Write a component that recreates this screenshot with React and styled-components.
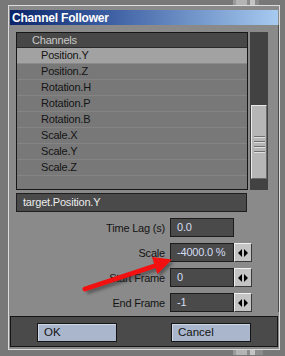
import React from "react";
import styled, { createGlobalStyle } from "styled-components";

const Global = createGlobalStyle`
  html, body { margin: 0; padding: 0; background: #787878; }
  body { font-family: "Liberation Sans", Arial, sans-serif; }
  * { box-sizing: border-box; }
`;

const Page = styled.div`
  position: relative;
  width: 285px;
  height: 356px;
  background: #787878;
  padding-left: 8px;
  overflow: hidden;
`;

const Strip = styled.div`
  height: ${(p) => p.h}px;
  display: flex;
  padding-left: 225px;
`;

const BehindBlock = styled.div`
  width: ${(p) => p.w}px;
  height: 100%;
  background: linear-gradient(to right, #9a9a9a 0 3px, #b4b4b4 3px 14px, #8a8a8a 14px 17px, #c4c4c4 17px 22px, #8c8c8c 22px);
`;

const Dialog = styled.div`
  width: 272px;
  border: 1px solid #dcdcdc;
  background: #8a8a8a;
  padding: 4px 1px 2px 1px;
  display: flex;
  flex-direction: column;
`;

const TitleBar = styled.div`
  height: 15px;
  background: linear-gradient(to right, #0a246a 0%, #3a5ca0 35%, #a6caf0 100%);
  color: #ffffff;
  font-weight: bold;
  font-size: 12px;
  letter-spacing: -0.2px;
  line-height: 16px;
  padding-left: 2px;
  white-space: nowrap;
`;

const Body = styled.div`
  display: flex;
  flex-direction: column;
  padding: 7px 0 0 6px;
  border-right: 1px solid #4a4a4a;
  margin-right: -1px;
`;

const ListArea = styled.div`
  display: flex;
  gap: 2px;
`;

const ListBox = styled.div`
  width: 232px;
  height: 158px;
  border: 1px solid #161616;
  background: #787878;
  display: flex;
  flex-direction: column;
  font-size: 11px;
  letter-spacing: -0.2px;
`;

const ListHeader = styled.div`
  height: 15px;
  line-height: 15px;
  background: #484848;
  color: #c8c8c8;
  padding-left: 15px;
  border-bottom: 1px solid #2a2a2a;
`;

const Row = styled.div`
  height: 16px;
  line-height: 15px;
  padding-left: 24px;
  color: #141414;
  background: ${(p) => (p.selected ? "#a2a2a2" : "#787878")};
  border-bottom: 1px solid ${(p) => (p.selected ? "#8a8a8a" : "#848484")};
`;

const ScrollBar = styled.div`
  width: 18px;
  height: 158px;
  background: #424242;
  display: flex;
  flex-direction: column;
`;

const ScrollSpace = styled.div`
  height: ${(p) => p.h}px;
  flex: none;
`;

const Thumb = styled.div`
  height: 74px;
  flex: none;
  margin: 0 1px;
  background: #b6b6b6;
  border-top: 1px solid #e8e8e8;
  border-left: 1px solid #e8e8e8;
  border-right: 1px solid #6a6a6a;
  border-bottom: 1px solid #6a6a6a;
  display: flex;
  flex-direction: column;
  align-items: center;
  padding-top: 30px;
  gap: 4px;
`;

const Grip = styled.div`
  width: 11px;
  height: 1px;
  background: #707070;
  box-shadow: 0 1px 0 #e0e0e0;
`;

const TargetField = styled.div`
  margin-top: 3px;
  width: 231px;
  height: 19px;
  background: #4a4a4a;
  border: 1px solid #1e1e1e;
  color: #ececec;
  font-size: 11px;
  letter-spacing: -0.2px;
  line-height: 17px;
  padding-left: 6px;
`;

const Form = styled.div`
  display: flex;
  flex-direction: column;
  gap: 6px;
  margin-top: 6px;
`;

const FormRow = styled.div`
  display: grid;
  grid-template-columns: 154px 64px 18px;
  height: 19px;
  align-items: center;
`;

const Label = styled.div`
  text-align: right;
  padding-right: 5px;
  font-size: 11px;
  letter-spacing: -0.2px;
  color: #141414;
  white-space: nowrap;
`;

const ValueBox = styled.div`
  height: 19px;
  background: #4a4a4a;
  border: 1px solid #1c1c1c;
  color: #d4def4;
  font-size: 11px;
  letter-spacing: -0.2px;
  line-height: 17px;
  padding-left: 6px;
  white-space: nowrap;
`;

const Spinner = styled.div`
  height: 19px;
  background: #c4c4c4;
  border-top: 1px solid #f0f0f0;
  border-left: 1px solid #f0f0f0;
  border-right: 1px solid #3a3a3a;
  border-bottom: 1px solid #3a3a3a;
  display: flex;
  align-items: center;
  justify-content: center;
`;

const ButtonPanel = styled.div`
  margin: 4px 0 0 0;
  height: 31px;
  background: #4a4a4a;
  border: 1px solid #141414;
  display: flex;
  padding: 6px 0 0 26px;
  gap: 54px;
`;

const Button = styled.div`
  width: 80px;
  height: 19px;
  background: #a9b6cc;
  border: 1px solid #141414;
  box-shadow: inset 1px 1px 0 #d0d8e6;
  color: #141414;
  font-size: 11.5px;
  line-height: 17px;
  padding-left: 6px;
`;

const Overlay = styled.svg`
  position: absolute;
  left: 0;
  top: 0;
  pointer-events: none;
`;

const SpinIcon = () => (
  <svg width="10" height="8" viewBox="0 0 10 8">
    <polygon points="4,0 4,8 0,4" fill="#000" />
    <polygon points="6,0 6,8 10,4" fill="#000" />
  </svg>
);

const channels = [
  "Position.Y",
  "Position.Z",
  "Rotation.H",
  "Rotation.P",
  "Rotation.B",
  "Scale.X",
  "Scale.Y",
  "Scale.Z",
];

const fields = [
  { label: "Time Lag (s)", value: "0.0", spin: false },
  { label: "Scale", value: "-4000.0 %", spin: true },
  { label: "Start Frame", value: "0", spin: true },
  { label: "End Frame", value: "-1", spin: true },
];

export default function App() {
  return (
    <>
      <Global />
      <Page>
        <Strip h={5}>
          <BehindBlock w={26} />
        </Strip>
        <Dialog>
          <TitleBar>Channel Follower</TitleBar>
          <Body>
            <ListArea>
              <ListBox>
                <ListHeader>Channels</ListHeader>
                {channels.map((c, i) => (
                  <Row key={c} selected={i === 0}>
                    {c}
                  </Row>
                ))}
              </ListBox>
              <ScrollBar>
                <ScrollSpace h={73} />
                <Thumb>
                  <Grip />
                  <Grip />
                  <Grip />
                  <Grip />
                </Thumb>
              </ScrollBar>
            </ListArea>
            <TargetField>target.Position.Y</TargetField>
            <Form>
              {fields.map((f) => (
                <FormRow key={f.label}>
                  <Label>{f.label}</Label>
                  <ValueBox>{f.value}</ValueBox>
                  {f.spin ? (
                    <Spinner>
                      <SpinIcon />
                    </Spinner>
                  ) : (
                    <span />
                  )}
                </FormRow>
              ))}
            </Form>
          </Body>
          <ButtonPanel>
            <Button>OK</Button>
            <Button>Cancel</Button>
          </ButtonPanel>
        </Dialog>
        <Strip h={5}>
          <BehindBlock w={30} />
        </Strip>
        <Overlay width="285" height="356" viewBox="0 0 285 356">
          <defs>
            <filter id="sh" x="-20%" y="-50%" width="140%" height="200%">
              <feGaussianBlur stdDeviation="1.6" />
            </filter>
          </defs>
          <g transform="translate(2,3)" opacity="0.45" filter="url(#sh)">
            <line x1="85" y1="289" x2="156" y2="265.5" stroke="#202020" strokeWidth="5" />
            <polygon points="172,259.5 152,257 157.5,274" fill="#202020" />
          </g>
          <line x1="85" y1="289" x2="156" y2="265.5" stroke="#f21010" strokeWidth="5" strokeLinecap="round" />
          <polygon points="172,259.5 152,257 157.5,274" fill="#f21010" />
        </Overlay>
      </Page>
    </>
  );
}
